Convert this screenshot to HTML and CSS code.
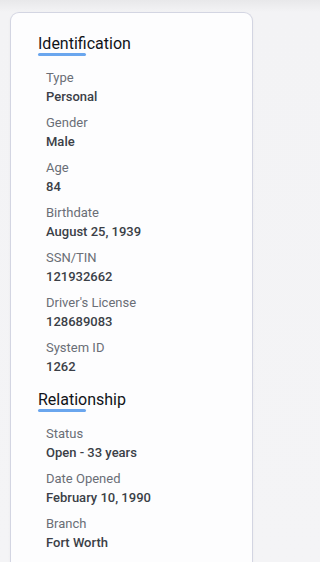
FILE: index.html
```html
<!DOCTYPE html>
<html lang="en">
<head>
<meta charset="utf-8">
<title>Customer details</title>
<link rel="stylesheet" href="styles.css">
</head>
<body>
<div class="page">
  <div class="card">
    <section class="section">
      <h2 class="section-title">Identification</h2>
      <dl class="fields">
        <div class="field"><dt>Type</dt><dd>Personal</dd></div>
        <div class="field"><dt>Gender</dt><dd>Male</dd></div>
        <div class="field"><dt>Age</dt><dd>84</dd></div>
        <div class="field"><dt>Birthdate</dt><dd>August 25, 1939</dd></div>
        <div class="field"><dt>SSN/TIN</dt><dd>121932662</dd></div>
        <div class="field"><dt>Driver's License</dt><dd>128689083</dd></div>
        <div class="field"><dt>System ID</dt><dd>1262</dd></div>
      </dl>
    </section>
    <section class="section">
      <h2 class="section-title">Relationship</h2>
      <dl class="fields">
        <div class="field"><dt>Status</dt><dd>Open - 33 years</dd></div>
        <div class="field"><dt>Date Opened</dt><dd>February 10, 1990</dd></div>
        <div class="field"><dt>Branch</dt><dd>Fort Worth</dd></div>
      </dl>
    </section>
  </div>
</div>
</body>
</html>
```

FILE: styles.css
```css
html, body {
  margin: 0;
  padding: 0;
  height: 100%;
  overflow: hidden;
}
body {
  font-family: Roboto, "Liberation Sans", Arial, sans-serif;
  background: linear-gradient(to bottom, #e8e8ea 0px, #f3f3f5 12px, #f4f4f6 100%);
}
.page {
  box-sizing: border-box;
  width: 269px;
  height: 562px;
  padding: 12px 16px 0 10px;
  display: flex;
  flex-direction: column;
}
.card {
  flex: 1;
  background: #fdfdfe;
  border: 1px solid #d3d5e2;
  border-bottom: none;
  border-radius: 9px 9px 0 0;
  padding: 22px 20px 0 27px;
  overflow: hidden;
  box-shadow: 0 1px 3px rgba(0, 0, 0, 0.04);
}
.section + .section {
  margin-top: 15px;
}
.section-title {
  margin: 0;
  font-size: 16px;
  line-height: 18px;
  font-weight: 400;
  color: #111318;
}
.section-title::after {
  content: "";
  display: block;
  width: 48px;
  height: 3px;
  border-radius: 2px;
  background: #6aa6ee;
}
.fields {
  margin: 12px 0 0 0;
  padding: 0 0 0 8px;
  display: flex;
  flex-direction: column;
  gap: 7px;
}
.field dt {
  font-size: 13px;
  line-height: 19px;
  color: #6a6e76;
  font-weight: 400;
}
.field dd {
  margin: 0;
  font-size: 13px;
  line-height: 19px;
  color: #3b3f47;
  font-weight: 500;
}
```
